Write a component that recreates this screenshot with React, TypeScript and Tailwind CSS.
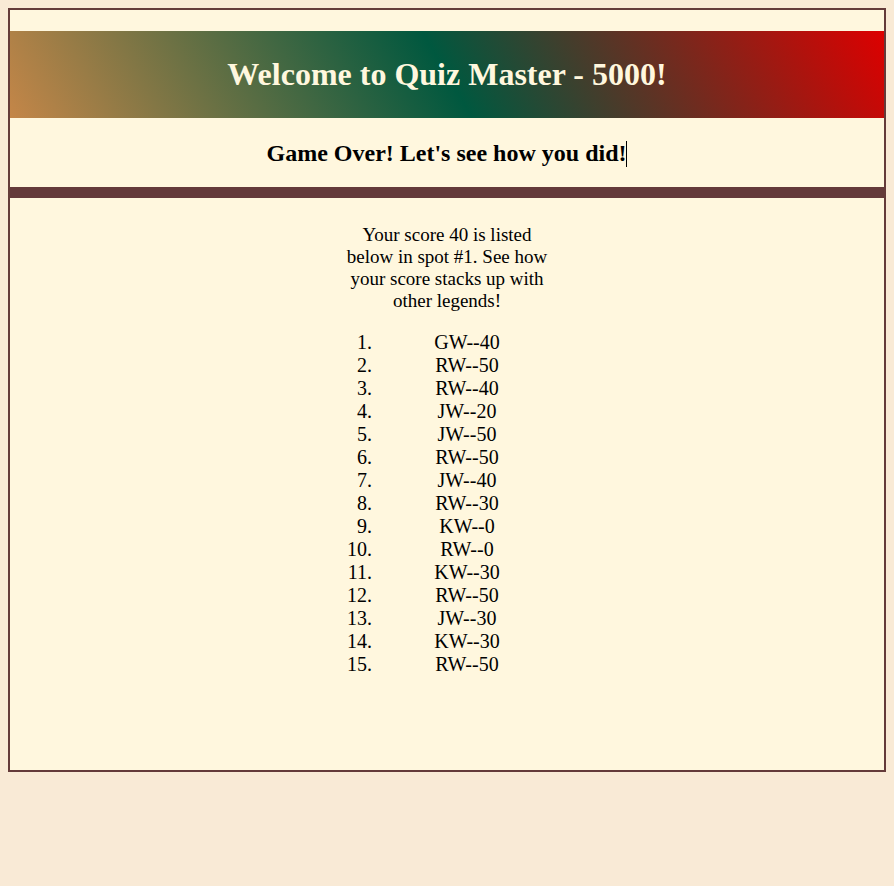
const scores = [
  "GW--40",
  "RW--50",
  "RW--40",
  "JW--20",
  "JW--50",
  "RW--50",
  "JW--40",
  "RW--30",
  "KW--0",
  "RW--0",
  "KW--30",
  "RW--50",
  "JW--30",
  "KW--30",
  "RW--50",
];

export default function App() {
  return (
    <div
      className="min-h-[886px] bg-[#f9ead6] p-2 text-black"
      style={{ fontFamily: '"Liberation Serif", "Times New Roman", serif' }}
    >
      <div className="border-2 border-[#643a3a] bg-[#fff7de] pt-[21px] h-[764px]">
        <h1 className="bg-[linear-gradient(60deg,#c48648,#00583f,#dd0000)] text-[#fff7de] text-[32px] font-bold text-center leading-[37px] py-[25px]">
          Welcome to Quiz Master - 5000!
        </h1>
        <h2 className="mt-[21px] mb-[20px] text-[24px] font-bold text-center leading-[28px]">
          Game Over! Let's see how you did!
          <span className="inline-block w-px h-[26px] bg-black align-[-6px]" />
        </h2>
        <div className="h-[11px] bg-[#643a3a]" />
        <div className="w-[210px] mx-auto mt-[26px]">
          <p className="text-center text-[19px] leading-[22px]">
            Your score 40 is listed below in spot #1. See how your score stacks up with other legends!
          </p>
          <ol className="mt-[19px] text-[20px]">
            {scores.map((s, i) => (
              <li key={i} className="flex leading-[23px]">
                <span className="w-[30px] text-right">{i + 1}.</span>
                <span className="flex-1 ml-[10px] text-center">{s}</span>
              </li>
            ))}
          </ol>
        </div>
      </div>
    </div>
  );
}
